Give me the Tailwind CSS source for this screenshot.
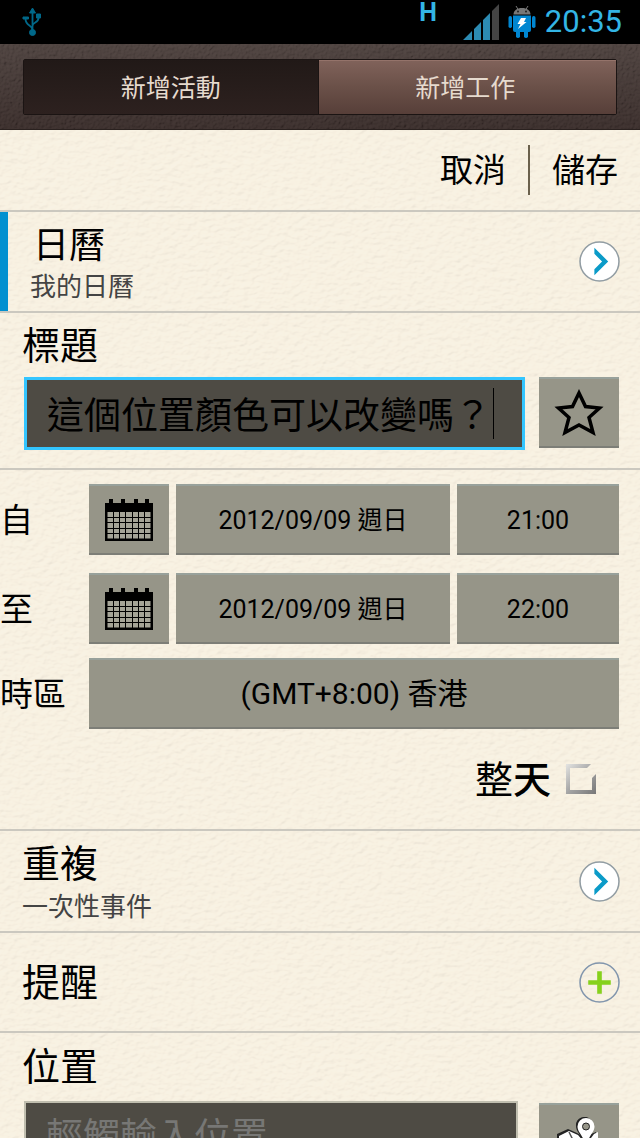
<!DOCTYPE html>
<html lang="zh-Hant">
<head>
    <meta charset="UTF-8">
    <meta name="viewport" content="width=device-width, initial-scale=1.0">
    <title>新增活動</title>
    <script src="https://cdn.jsdelivr.net/npm/@tailwindcss/browser@4"></script>
</head>
<body class="h-screen overflow-hidden flex flex-col bg-[#f8f1e3] text-black font-[Roboto,'Noto_Sans_CJK_TC',sans-serif]">

    <!-- Status bar -->
    <div class="h-11 shrink-0 bg-black flex items-center justify-between pl-5 pr-[18px]">
        <svg class="w-6 h-8" viewBox="0 0 24 32" fill="none" stroke="#006889" stroke-width="2">
            <path d="M12.500 6v20M12.500 24c0-5-7-4-7-11M12.500 20c0-4 6-3 6-8" stroke-width="1.800"/>
            <path d="M12.500 2l3 5h-6zM3 11h5.500v2H3zM16.500 8h4v4h-4z" fill="#006889" stroke-width="1"/>
            <circle cx="12.500" cy="26.500" r="3" fill="#006889" stroke-width="1"/>
        </svg>
        <div class="flex items-center h-full">
            <span class="self-start font-[Roboto] font-bold text-[25px] leading-[26px] text-[#33b5e5] mr-[26px]">H</span>
            <svg class="w-9 h-9 mr-[9px]" viewBox="0 0 36 36" fill="#2c8bb3">
                <path d="M0 36L9 27v9zM11 25l7-7v18h-7zM20 16l7-7v27h-7z"/>
                <path d="M29 7l7-7v36h-7z" fill="#444"/>
            </svg>
            <svg class="w-7 h-8 mr-[9px]" viewBox="0 0 28 32">
                <path d="M5.500 8.500c0-4 3.500-6.500 8.500-6.500s8.500 2.500 8.500 6.500z" fill="#777"/>
                <path d="M8 0l2.500 4M20 0l-2.500 4" stroke="#777"/>
                <circle cx="10" cy="5.500" r="1" fill="#222"/>
                <circle cx="18" cy="5.500" r="1" fill="#222"/>
                <path d="M5 9.500h18V24q0 2-2 2H7q-2 0-2-2z" fill="#0086d1"/>
                <rect x="0.500" y="10" width="3.500" height="12" rx="1.700" fill="#0086d1"/>
                <rect x="24" y="10" width="3.500" height="12" rx="1.700" fill="#0086d1"/>
                <rect x="8" y="24" width="4" height="8" rx="1.800" fill="#0086d1"/>
                <rect x="16" y="24" width="4" height="8" rx="1.800" fill="#0086d1"/>
                <path d="M13 12h5l-2 4h2.500l-8.500 7 2.500-5h-3z" fill="#fff"/>
            </svg>
            <span class="text-[31px] leading-[44px] text-[#33b5e5]">20:35</span>
        </div>
    </div>

    <!-- Tabs -->
    <header class="relative shrink-0 bg-linear-to-b from-[#4a3f3c] to-[#352927] border-b border-[#2a211f] px-[23px] pt-[15px] pb-[14px]">
        <svg class="absolute inset-0 w-full h-full opacity-10" aria-hidden="true">
            <filter id="leather">
                <feTurbulence type="fractalNoise" baseFrequency="0.35" numOctaves="3"/>
                <feDiffuseLighting lighting-color="#b9a7a0" surfaceScale="2"><feDistantLight azimuth="45" elevation="35"/></feDiffuseLighting>
            </filter>
            <rect width="100%" height="100%" filter="url(#leather)"/>
        </svg>
        <div class="relative flex h-14 border border-[#1b1413] rounded-xs text-[25px] text-[#e6dace]">
            <button class="flex-1 pt-[3px] bg-linear-to-b from-[#211917] to-[#2d211f] border-r border-[#1b1413]">新增活動</button>
            <button class="flex-1 pt-0.5 pr-1 bg-linear-to-b from-[#80625a] via-[#6a5048] to-[#573f39] border-t border-[#94736a]">新增工作</button>
        </div>
    </header>

    <main class="relative flex-1 min-h-0 overflow-hidden">
        <!-- Paper grain -->
        <svg class="absolute inset-0 w-full h-full opacity-10" aria-hidden="true">
            <filter id="paper">
                <feTurbulence type="fractalNoise" baseFrequency="0.15 0.22" numOctaves="2"/>
                <feDiffuseLighting lighting-color="#fff4d8" surfaceScale="2" diffuseConstant="1.300"><feDistantLight azimuth="60" elevation="50"/></feDiffuseLighting>
            </filter>
            <rect width="100%" height="100%" filter="url(#paper)"/>
        </svg>

        <form class="relative">
            <div class="flex items-center justify-end h-[82px] border-b-2 border-[#cbc8bf] pr-[22px] text-[33px]">
                <button type="button" class="pt-0.5">取消</button>
                <span class="w-0.5 h-[50px] bg-[#6b614c] mx-[22px]"></span>
                <button type="button" class="pt-0.5">儲存</button>
            </div>

            <section class="flex items-center h-[101px] border-b-2 border-[#cbc8bf] pr-5">
                <span class="self-stretch w-2 bg-[#0290d0]"></span>
                <div class="flex-1 pl-[22px] pt-1">
                    <h2 class="text-4xl leading-[46px] pl-[3px]">日曆</h2>
                    <p class="text-[26px] leading-9 text-[#444]">我的日曆</p>
                </div>
                <button type="button" aria-label="選擇日曆">
                    <svg class="w-[41px] h-[41px]" viewBox="0 0 40 40">
                        <circle cx="20" cy="20" r="19" fill="#fff" stroke="#929da3" stroke-width="1.500"/>
                        <path d="M15 6.500L28.500 20 15 33.500V27.500L22.500 20 15 12.500z" fill="#0b9bc8"/>
                    </svg>
                </button>
            </section>

            <section class="border-b-2 border-[#cbc8bf] pl-6 pr-[21px] pt-[7px] pb-[18px]">
                <label for="title" class="block text-[38px] leading-[52px] -ml-0.5">標題</label>
                <div class="flex gap-[14px] pt-[5px]">
                    <div class="relative flex-1">
                        <input id="title" type="text" value="這個位置顏色可以改變嗎？" class="block w-full h-[73px] bg-[#4e4b44] border-3 border-[#33c5ff] pl-5 pb-0.5 text-[37px] outline-none">
                        <span class="absolute left-[469px] top-[11px] w-px h-[51px] bg-black"></span>
                    </div>
                    <button type="button" aria-label="我的最愛" class="flex items-center justify-center w-20 h-[71px] bg-[#969588] border-t-2 border-t-[#98a19b] border-b-2 border-b-[#7d7e77]">
                        <svg class="w-[50px] h-12" viewBox="0 0 50 48" fill="none" stroke="#000" stroke-width="3.500">
                            <path d="M25 4l6.500 13.500L45.500 19 35 28.500l4 15L25 36 11 43.500l4-15L4.500 19l14-1.500z"/>
                        </svg>
                    </button>
                </div>
            </section>

            <section class="border-b-2 border-[#cbc8bf] pr-[21px] pt-[14px]">
                <div class="grid grid-cols-[82px_80px_1fr_162px] gap-x-[7px] gap-y-[18px] text-[25px]">
                    <span class="self-center text-[33px] pt-0.5">自</span>
                    <button type="button" aria-label="開始日期" class="flex items-center justify-center h-[71px] bg-[#969588] border-t-2 border-t-[#98a19b] border-b-2 border-b-[#7d7e77]">
                        <svg class="w-12 h-[42px]" viewBox="0 0 48 42">
                            <path d="M0 4h48v38H0zM4 0h4v4H4zM16 0h4v4h-4zM29 0h4v4h-4zM40 0h4v4h-4z"/>
                            <path d="M2.500 13h43v26.500h-43z" fill="#a5a497"/>
                            <path d="M8.500 13v27M14.500 13v27M20.500 13v27M27.500 13v27M33.500 13v27M39.500 13v27M2 18.500h44M2 23.500h44M2 29.500h44M2 34.500h44" stroke="#000"/>
                        </svg>
                    </button>
                    <button type="button" class="pt-0.5 bg-[#969588] border-t-2 border-t-[#98a19b] border-b-2 border-b-[#7d7e77]">2012/09/09 週日</button>
                    <button type="button" class="pt-0.5 bg-[#969588] border-t-2 border-t-[#98a19b] border-b-2 border-b-[#7d7e77]">21:00</button>

                    <span class="self-center text-[33px] pt-0.5">至</span>
                    <button type="button" aria-label="結束日期" class="flex items-center justify-center h-[71px] bg-[#969588] border-t-2 border-t-[#98a19b] border-b-2 border-b-[#7d7e77]">
                        <svg class="w-12 h-[42px]" viewBox="0 0 48 42">
                            <path d="M0 4h48v38H0zM4 0h4v4H4zM16 0h4v4h-4zM29 0h4v4h-4zM40 0h4v4h-4z"/>
                            <path d="M2.500 13h43v26.500h-43z" fill="#a5a497"/>
                            <path d="M8.500 13v27M14.500 13v27M20.500 13v27M27.500 13v27M33.500 13v27M39.500 13v27M2 18.500h44M2 23.500h44M2 29.500h44M2 34.500h44" stroke="#000"/>
                        </svg>
                    </button>
                    <button type="button" class="pt-0.5 bg-[#969588] border-t-2 border-t-[#98a19b] border-b-2 border-b-[#7d7e77]">2012/09/09 週日</button>
                    <button type="button" class="pt-0.5 bg-[#969588] border-t-2 border-t-[#98a19b] border-b-2 border-b-[#7d7e77]">22:00</button>
                </div>
                <div class="grid grid-cols-[82px_1fr] gap-x-[7px] pt-[14px]">
                    <span class="self-center text-[33px] pt-0.5">時區</span>
                    <button type="button" class="h-[71px] bg-[#969588] border-t-2 border-t-[#98a19b] border-b-2 border-b-[#7d7e77] text-[30px]">(GMT+8:00) 香港</button>
                </div>
                <div class="flex items-center justify-end h-[100px] pr-[22px]">
                    <label for="allday" class="text-[38px] pt-0.5">整<span class="font-medium">天</span></label>
                    <div class="relative w-8 h-8 ml-[14px]">
                        <input id="allday" type="checkbox" class="block w-8 h-8 appearance-none">
                        <svg class="absolute inset-0 w-8 h-8 pointer-events-none" viewBox="0 0 32 32">
                            <linearGradient id="metal" x1="0" y1="0" x2="1" y2="1">
                                <stop offset="0" stop-color="#e4e4e2"/>
                                <stop offset="0.500" stop-color="#a5a5a5"/>
                                <stop offset="1" stop-color="#777"/>
                            </linearGradient>
                            <path d="M1 1h25l-4 4H5v22h22V15l4-4v20H1z" fill="url(#metal)"/>
                        </svg>
                    </div>
                </div>
            </section>

            <section class="flex items-center justify-between h-[102px] border-b-2 border-[#cbc8bf] pl-[22px] pr-5">
                <div class="pt-0.5">
                    <h2 class="text-[38px] leading-[50px]">重複</h2>
                    <p class="text-[26px] leading-9 text-[#444]">一次性事件</p>
                </div>
                <button type="button" aria-label="設定重複">
                    <svg class="w-[41px] h-[41px]" viewBox="0 0 40 40">
                        <circle cx="20" cy="20" r="19" fill="#fff" stroke="#929da3" stroke-width="1.500"/>
                        <path d="M15 6.500L28.500 20 15 33.500V27.500L22.500 20 15 12.500z" fill="#0b9bc8"/>
                    </svg>
                </button>
            </section>

            <section class="flex items-center justify-between h-[100px] border-b-2 border-[#cbc8bf] pl-[22px] pr-5">
                <h2 class="text-[38px] pt-0.5">提醒</h2>
                <button type="button" aria-label="新增提醒">
                    <svg class="w-[41px] h-[41px]" viewBox="0 0 40 40">
                        <circle cx="20" cy="20" r="19" fill="none" stroke="#8296ad" stroke-width="1.500"/>
                        <path d="M20 9v22M9 20h22" stroke="#86d11c" stroke-width="4.500"/>
                    </svg>
                </button>
            </section>

            <section class="pl-6 pr-[21px] pt-2">
                <label for="place" class="block text-[38px] leading-[52px] -ml-0.5">位置</label>
                <div class="flex gap-[21px] pt-2">
                    <input id="place" type="text" placeholder="輕觸輸入位置" class="flex-1 min-w-0 h-[72px] bg-[#4e4b44] border-2 border-[#c0beaf] pl-5 text-[37px] placeholder:text-[#777775]">
                    <button type="button" aria-label="地圖" class="flex justify-center w-20 h-[71px] mt-[2px] pt-3 bg-[#969588] border-t-2 border-t-[#98a19b] border-b-2 border-b-[#7d7e77]">
                        <svg class="w-12 h-12" viewBox="0 0 48 48">
                            <path d="M2 17l11-5 9 4 7 4 12-5v22l-13 6-11-5-15 6z" fill="#222"/>
                            <path d="M4 19l10-5 9 4 6 7h4l6-8 4-2v22l-13 6-11-5-15 5z" fill="#fff"/>
                            <path d="M14 15l4 8v14" fill="none" stroke="#555" stroke-width="1.500"/>
                            <path d="M21 9a8.500 8.500 0 0115-6l-5 22c-3-4-10-10-10-16z" fill="#222"/>
                            <path d="M22.500 9.500a8.500 8.500 0 0117 0c0 6-6 9-7 17h-3c-1-8-7-11-7-17z" fill="#fff"/>
                            <circle cx="31" cy="9.500" r="3.500" fill="#969588" stroke="#222"/>
                        </svg>
                    </button>
                </div>
            </section>
        </form>
    </main>
</body>
</html>
